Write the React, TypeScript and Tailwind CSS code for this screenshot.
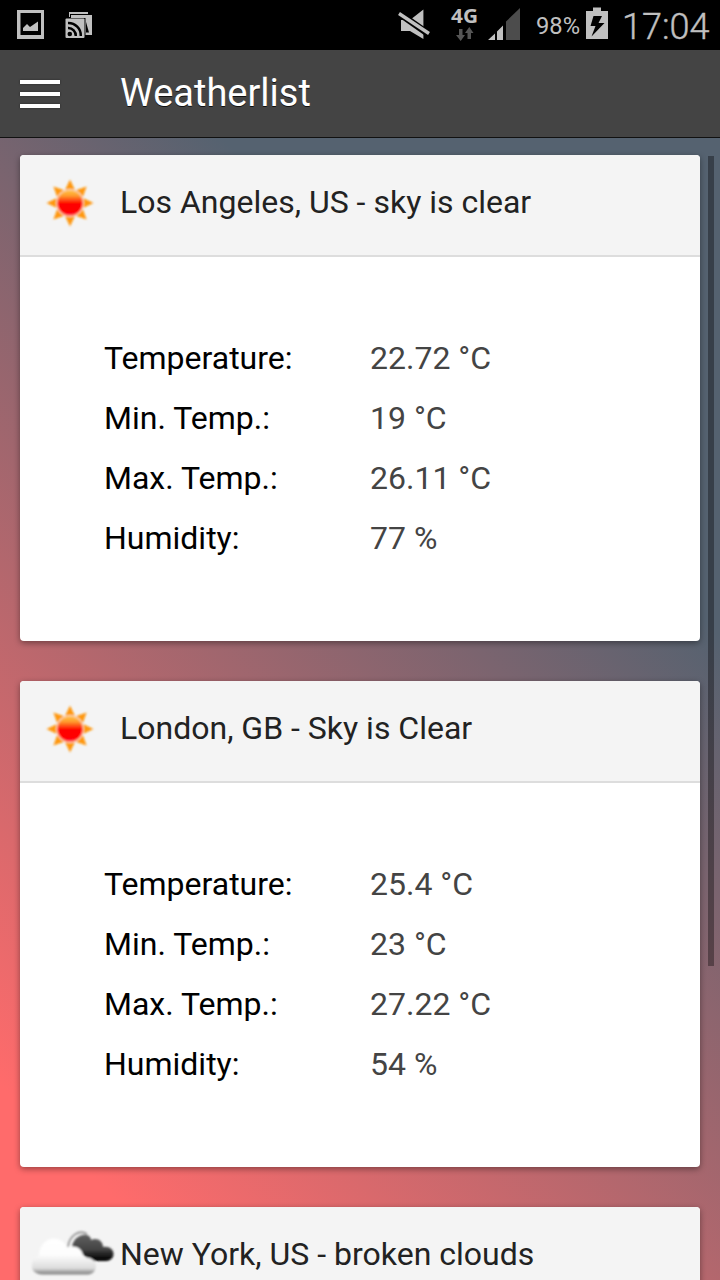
type Weather = {
  place: string;
  icon: 'sun' | 'clouds';
  rows: [string, string][];
};

const items: Weather[] = [
  {
    place: 'Los Angeles, US - sky is clear',
    icon: 'sun',
    rows: [['Temperature:', '22.72 °C'], ['Min. Temp.:', '19 °C'], ['Max. Temp.:', '26.11 °C'], ['Humidity:', '77 %']],
  },
  {
    place: 'London, GB - Sky is Clear',
    icon: 'sun',
    rows: [['Temperature:', '25.4 °C'], ['Min. Temp.:', '23 °C'], ['Max. Temp.:', '27.22 °C'], ['Humidity:', '54 %']],
  },
  { place: 'New York, US - broken clouds', icon: 'clouds', rows: [] },
];

function Sun() {
  return (
    <svg className="h-[100px] w-[100px] shrink-0" viewBox="0 0 100 100">
      <defs>
        <linearGradient id="sunFill" x1="0" y1="0" x2="0" y2="1">
          <stop offset="0" stopColor="#ffc040" />
          <stop offset=".2" stopColor="#ffa030" />
          <stop offset=".42" stopColor="#ff3a10" />
          <stop offset=".52" stopColor="#ff0000" />
          <stop offset=".86" stopColor="#ff0000" />
          <stop offset="1" stopColor="#ff2b48" />
        </linearGradient>
        <filter id="raySoft" x="-10%" y="-10%" width="120%" height="120%">
          <feGaussianBlur stdDeviation=".9" />
        </filter>
      </defs>
      <g filter="url(#raySoft)">
        {[0, 45, 90, 135, 180, 225, 270, 315].map((a) => (
          <path key={a} d="M50 24.500 L55 35 Q50 33 45 35 Z" fill="#ff970f" transform={`rotate(${a} 50 48)`} />
        ))}
        <circle cx="50" cy="48" r="13.4" fill="#ffc9a0" />
        <circle cx="50" cy="48" r="12.6" fill="url(#sunFill)" />
      </g>
    </svg>
  );
}

function Clouds() {
  return (
    <svg className="h-[100px] w-[100px] shrink-0" viewBox="0 0 100 100">
      <defs>
        <linearGradient id="darkCloud" gradientUnits="userSpaceOnUse" x1="0" y1="25" x2="0" y2="54">
          <stop offset="0" stopColor="#666" />
          <stop offset=".6" stopColor="#444" />
          <stop offset=".85" stopColor="#111" />
          <stop offset="1" stopColor="#000" />
        </linearGradient>
        <linearGradient id="lightCloud" gradientUnits="userSpaceOnUse" x1="0" y1="31" x2="0" y2="68">
          <stop offset="0" stopColor="#fff" />
          <stop offset=".45" stopColor="#fdfdfd" />
          <stop offset=".82" stopColor="#dcdcdc" />
          <stop offset=".9" stopColor="#aaa" />
          <stop offset="1" stopColor="#777" />
        </linearGradient>
        <filter id="cloudSoft" x="-10%" y="-10%" width="120%" height="120%">
          <feGaussianBlur stdDeviation="1" />
        </filter>
      </defs>
      <g filter="url(#cloudSoft)">
        <path d="M48 40 C49 29 59 22 67 27" fill="none" stroke="#999" strokeWidth="1.800" />
        <path d="M52 40 C53 32 60 27 67 28 C70 29 71 31 71 33 C77 30 83 34 83 40 C90 39 93.500 43 93.500 47 C93.500 51 90 54 86 54 H72 C65 50 62 46 54 42Z" fill="url(#darkCloud)" />
        <path d="M22 67.500 C14 67 11 62 12 58 C12 53 15 50 19 49 C19 40 25 31 34 31.500 C41 32 46 36 47 41 C55 37 64 42 63 51 C70 49 77 54 76 60 C75 65 72 67.500 67 67.500Z" fill="url(#lightCloud)" />
      </g>
    </svg>
  );
}

function StatusBar() {
  return (
    <div className="flex h-[50px] shrink-0 bg-black text-[#c0c0c0]">
      <svg className="h-[50px] w-[100px]" viewBox="0 0 100 50">
        <path fill="#c0c0c0" fillRule="evenodd" d="M17 10H44V39H17ZM20.500 13V35H41V13Z" />
        <path fill="#c0c0c0" d="M23 31V28L27 24L30 27L38 21.500V31Z" />
        <path fill="#c0c0c0" d="M69 17V12H88V14H70V17ZM71 18V15H92V35H85.500V18Z" />
        <path fill="#000" d="M86 22L89 32.500H86Z" />
        <rect x="65.5" y="18.5" width="19" height="19.5" rx="1" fill="#c0c0c0" />
        <circle cx="69.8" cy="34" r="2.3" fill="#000" />
        <path d="M68 28A7.500 7.500 0 0 1 75.800 36M68 23A12.500 12.500 0 0 1 80.800 36" fill="none" stroke="#000" strokeWidth="2.500" />
      </svg>
      <svg className="ml-[280px] h-[50px] w-[150px]" viewBox="380 0 150 50">
        <path d="M401 20H410L423.400 9.500V39L410 31H401Z" fill="#c0c0c0" />
        <path d="M398 12.500L430 35" stroke="#000" strokeWidth="7" />
        <path d="M399 13.500L429 33.500" stroke="#c0c0c0" strokeWidth="3.400" />
        <text x="451" y="22.5" fill="#c0c0c0" fontFamily="Open Sans" fontWeight="700" fontSize="20" textLength="27" lengthAdjust="spacingAndGlyphs">4G</text>
        <path fill="#555" d="M459 29H462.500V35H465L460.700 41L456 35H459ZM467.500 39V33H465L469.300 27L473.500 33H471V39Z" />
        <path fill="#4c4c4c" d="M506 40V21.500L520 8V40Z" />
        <path fill="#c0c0c0" d="M488 40L495 33.500V40ZM497 40V31.500L503 25.500V40Z" />
      </svg>
      <svg className="h-[50px] w-[190px]" viewBox="530 0 190 50">
        <text x="536" y="34" fill="#c0c0c0" fontFamily="Roboto" fontSize="24" textLength="44" lengthAdjust="spacingAndGlyphs">98%</text>
        <path fill="#c0c0c0" d="M593 7.500H601V11H608V39H586V11H593Z" />
        <path fill="#000" d="M593.500 16H602L598.500 23H604.500L591.500 36.500L595.500 26H590.500Z" />
        <text x="622" y="39" fill="#c0c0c0" stroke="#c0c0c0" strokeWidth=".4" fontFamily="Roboto" fontWeight="300" fontSize="36" textLength="87.5" lengthAdjust="spacingAndGlyphs">17:04</text>
      </svg>
    </div>
  );
}

function Card({ item }: { item: Weather }) {
  return (
    <section className="h-[486px] shrink-0 overflow-hidden rounded-[4px] bg-white shadow-[0_2px_6px_rgba(0,0,0,0.4)]">
      <header className="flex h-[102px] border-b-2 border-[#ddd] bg-[#f4f4f4]">
        {item.icon === 'sun' ? <Sun /> : <Clouds />}
        <h2 className="pt-[23px] text-[32px] leading-[48px] whitespace-nowrap text-[#222]">{item.place}</h2>
      </header>
      <dl className="flex flex-col pt-[71px] pl-[84px] text-[32px] leading-[60px]">
        {item.rows.map(([label, value]) => (
          <div key={label} className="flex h-[60px]">
            <dt className="w-[266px] text-black">{label}</dt>
            <dd className="text-[#444]">{value}</dd>
          </div>
        ))}
      </dl>
    </section>
  );
}

export default function App() {
  return (
    <div className="flex h-[1280px] w-[720px] flex-col overflow-hidden font-[Roboto,sans-serif]">
      <StatusBar />
      <div className="flex min-h-0 flex-1 flex-col bg-[linear-gradient(45deg,#ff6b6b_10%,#556270_70%)]">
        <header className="flex h-[88px] shrink-0 items-center border-b border-[#111] bg-[#444] pl-5">
          <div className="flex w-10 flex-col gap-2">
            <span className="h-1 bg-white shadow-[0_0_2px_#222]" />
            <span className="h-1 bg-white shadow-[0_0_2px_#222]" />
            <span className="h-1 bg-white shadow-[0_0_2px_#222]" />
          </div>
          <h1 className="mb-0.5 ml-[60px] text-[38px] leading-[48px] text-white [text-shadow:0_1px_0_#111]">Weatherlist</h1>
        </header>
        <div className="flex min-h-0 flex-1 overflow-hidden">
          <main className="flex w-[700px] flex-col gap-10 pt-[17px] pl-5">
            {items.map((item) => <Card key={item.place} item={item} />)}
          </main>
          <div className="mt-[18px] ml-2 h-[810px] w-1.5 bg-black/35" />
        </div>
      </div>
    </div>
  );
}
